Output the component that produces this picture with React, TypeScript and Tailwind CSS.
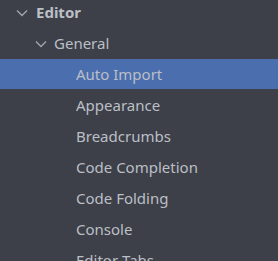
const children = [
  "Auto Import",
  "Appearance",
  "Breadcrumbs",
  "Code Completion",
  "Code Folding",
  "Console",
  "Editor Tabs",
];

function Chevron() {
  return (
    <svg width="12" height="8" viewBox="0 0 12 8" className="text-[#a2a6ad] shrink-0">
      <path d="M1 1.5 L6 6.5 L11 1.5" fill="none" stroke="currentColor" strokeWidth="1.3" />
    </svg>
  );
}

export default function App() {
  return (
    <div
      className="w-[278px] h-[261px] overflow-hidden bg-[#3d4048] text-[#bbbfc6] text-[15px]"
      style={{ fontFamily: '"Noto Sans", "Open Sans", sans-serif' }}
    >
      <div className="-mt-[3px]">
        <div className="h-[31px] flex items-center pl-[16px] gap-[8px]">
          <Chevron />
          <span className="font-bold">Editor</span>
        </div>
        <div className="h-[31px] flex items-center pl-[35px] gap-[7px]">
          <Chevron />
          <span>General</span>
        </div>
        {children.map((label, i) => (
          <div key={label} className="h-[31px]">
            <div
              className={`h-[30px] flex items-center pl-[76px] ${
                i === 0 ? "bg-[#4b6eaf]" : ""
              }`}
            >
              {label}
            </div>
          </div>
        ))}
      </div>
    </div>
  );
}
